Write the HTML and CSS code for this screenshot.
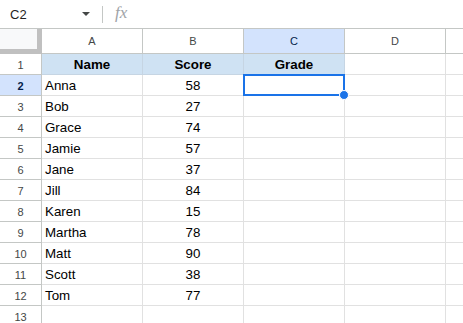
FILE: index.html
```html
<!DOCTYPE html>
<html lang="en">
	<head>
		<title>Grades</title>
		<meta charset="UTF-8">
		<link rel="stylesheet" href="styles.css">
	</head>
	<body>
		<div class="namebar">
			<span class="cellref">C2</span>
			<span class="caret"></span>
			<span class="sep"></span>
			<span class="fx">fx</span>
		</div>
		<div class="sheet">
			<div class="grid">
				<div class="corner"></div>
				<div class="colhead">A</div>
				<div class="colhead">B</div>
				<div class="colhead active">C</div>
				<div class="colhead">D</div>
				<div class="colhead last"></div>

				<div class="rowhead">1</div>
				<div class="cell title">Name</div>
				<div class="cell title">Score</div>
				<div class="cell title">Grade</div>
				<div class="cell"></div>
				<div class="cell last"></div>

				<div class="rowhead active">2</div>
				<div class="cell">Anna</div>
				<div class="cell num">58</div>
				<div class="cell"></div>
				<div class="cell"></div>
				<div class="cell last"></div>

				<div class="rowhead">3</div>
				<div class="cell">Bob</div>
				<div class="cell num">27</div>
				<div class="cell"></div>
				<div class="cell"></div>
				<div class="cell last"></div>

				<div class="rowhead">4</div>
				<div class="cell">Grace</div>
				<div class="cell num">74</div>
				<div class="cell"></div>
				<div class="cell"></div>
				<div class="cell last"></div>

				<div class="rowhead">5</div>
				<div class="cell">Jamie</div>
				<div class="cell num">57</div>
				<div class="cell"></div>
				<div class="cell"></div>
				<div class="cell last"></div>

				<div class="rowhead">6</div>
				<div class="cell">Jane</div>
				<div class="cell num">37</div>
				<div class="cell"></div>
				<div class="cell"></div>
				<div class="cell last"></div>

				<div class="rowhead">7</div>
				<div class="cell">Jill</div>
				<div class="cell num">84</div>
				<div class="cell"></div>
				<div class="cell"></div>
				<div class="cell last"></div>

				<div class="rowhead">8</div>
				<div class="cell">Karen</div>
				<div class="cell num">15</div>
				<div class="cell"></div>
				<div class="cell"></div>
				<div class="cell last"></div>

				<div class="rowhead">9</div>
				<div class="cell">Martha</div>
				<div class="cell num">78</div>
				<div class="cell"></div>
				<div class="cell"></div>
				<div class="cell last"></div>

				<div class="rowhead">10</div>
				<div class="cell">Matt</div>
				<div class="cell num">90</div>
				<div class="cell"></div>
				<div class="cell"></div>
				<div class="cell last"></div>

				<div class="rowhead">11</div>
				<div class="cell">Scott</div>
				<div class="cell num">38</div>
				<div class="cell"></div>
				<div class="cell"></div>
				<div class="cell last"></div>

				<div class="rowhead">12</div>
				<div class="cell">Tom</div>
				<div class="cell num">77</div>
				<div class="cell"></div>
				<div class="cell"></div>
				<div class="cell last"></div>

				<div class="rowhead">13</div>
				<div class="cell"></div>
				<div class="cell"></div>
				<div class="cell"></div>
				<div class="cell"></div>
				<div class="cell last"></div>
			</div>
			<div class="selection"><span class="handle"></span></div>
		</div>
	</body>
</html>
```

FILE: styles.css
```css
html, body { margin: 0; padding: 0; background: #fff; overflow: hidden; }
body { font-family: "Liberation Sans", Arial, sans-serif; color: #000; }

.namebar { height: 29px; box-sizing: border-box; border-bottom: 1px solid #c4c7c5; display: flex; align-items: center; }
.cellref { font-size: 13px; color: #1f1f1f; margin-left: 10px; width: 72px; }
.caret { width: 0; height: 0; border-left: 4px solid transparent; border-right: 4px solid transparent; border-top: 4px solid #444746; }
.sep { width: 1px; height: 17px; background: #c4c7c5; margin-left: 12px; }
.fx { font-family: "Liberation Serif", serif; font-style: italic; font-size: 17px; color: #a0a3a7; margin-left: 12px; margin-top: -2px; }

.sheet { position: relative; }
.grid { display: grid; grid-template-columns: 42px 101px 101px 101px 101px 1fr; grid-template-rows: 25px; grid-auto-rows: 21px; }
.grid > div { box-sizing: border-box; border-right: 1px solid #e1e1e1; border-bottom: 1px solid #e1e1e1; font-size: 10pt; line-height: 22px; white-space: nowrap; overflow: hidden; }

.corner { background: #f8f9fa; border-right: 5px solid #c0c0c0 !important; border-bottom: 5px solid #c0c0c0 !important; }
.colhead { font-size: 11px !important; color: #444746; text-align: center; line-height: 24px !important; border-right-color: #c4c7c5 !important; border-bottom-color: #c4c7c5 !important; }
.rowhead { font-size: 11px !important; color: #444746; text-align: center; border-right-color: #c4c7c5 !important; border-bottom-color: #c4c7c5 !important; }
.colhead.active, .rowhead.active { background: #d3e3fd; color: #041e49; font-weight: bold; }
.colhead.active { font-weight: normal; }
.grid > .last { border-right: none; }

.cell { padding: 0 3px; }
.cell.title { background: #cfe2f3; font-weight: bold; text-align: center; border-right-color: #c6d5e3; border-bottom-color: #c6d5e3; }
.cell.num { text-align: center; }

.selection { position: absolute; left: 243px; top: 45px; width: 102px; height: 22px; box-sizing: border-box; border: 2px solid #1a73e8; }
.handle { position: absolute; right: -6px; bottom: -6px; width: 8px; height: 8px; border-radius: 50%; background: #1a73e8; border: 1px solid #fff; }
```
